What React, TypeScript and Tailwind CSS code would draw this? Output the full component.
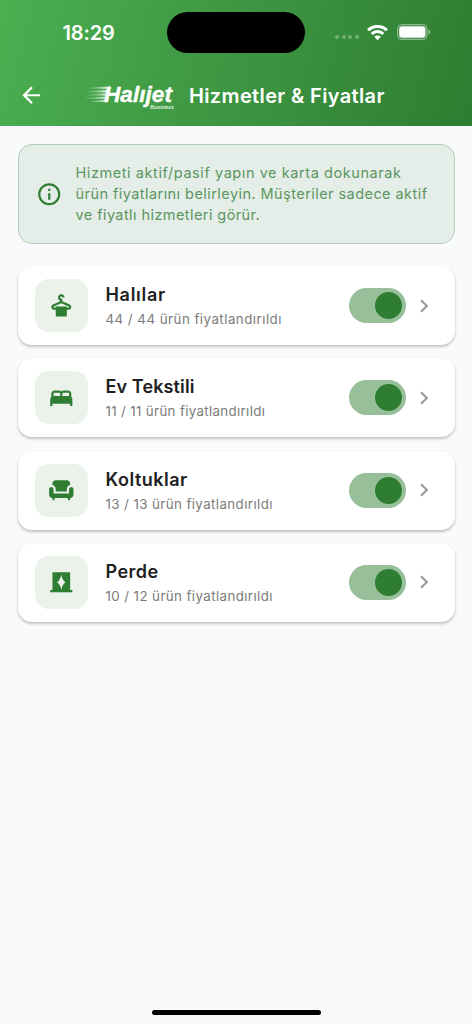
import type { ReactNode } from "react";
import { MdBed, MdChair, MdCurtains, MdDryCleaning, MdArrowBack, MdInfoOutline, MdChevronRight } from "react-icons/md";

type Service = { name: string; detail: string; icon: ReactNode; nameClass: string; detailClass: string };

const services: Service[] = [
  { name: "Halılar", detail: "44 / 44 ürün fiyatlandırıldı", icon: <MdDryCleaning />, nameClass: "tracking-[0.7px]", detailClass: "tracking-[0.48px]" },
  { name: "Ev Tekstili", detail: "11 / 11 ürün fiyatlandırıldı", icon: <MdBed />, nameClass: "tracking-[0.12px]", detailClass: "tracking-[0.34px]" },
  { name: "Koltuklar", detail: "13 / 13 ürün fiyatlandırıldı", icon: <MdChair />, nameClass: "tracking-[0.5px]", detailClass: "tracking-[0.41px]" },
  { name: "Perde", detail: "10 / 12 ürün fiyatlandırıldı", icon: <MdCurtains />, nameClass: "tracking-[0.45px]", detailClass: "tracking-[0.41px]" },
];

function Logo() {
  return (
    <svg width="98" height="30" viewBox="0 0 98 30" className="shrink-0">
      <defs>
        <linearGradient id="speed" gradientUnits="userSpaceOnUse" x1="2" x2="31" y1="0" y2="0">
          <stop offset="0" stopColor="#1f6b35" stopOpacity="0.4" />
          <stop offset="0.35" stopColor="#a0d0a0" stopOpacity="0.35" />
          <stop offset="1" stopColor="#fff" />
        </linearGradient>
      </defs>
      <g fill="url(#speed)">
        <path d="M10 6.4 32 5.6 31.5 8 10 7.6z" />
        <path d="M3 10.2 31 8.8 30.5 11.4 3 11.4z" />
        <path d="M10 13.4 30 12.1 29.5 14.7 10 14.6z" />
        <path d="M2 16.8 29.5 15.4 29 18 2 18z" />
        <path d="M12 20 29 18.6 28.3 21 12 21z" />
      </g>
      <g fill="#fff" fontFamily="Liberation Sans, sans-serif" fontStyle="italic" fontWeight="700">
        <text x="25" y="21" fontSize="22.5" textLength="68" lengthAdjust="spacingAndGlyphs" stroke="#fff" strokeWidth=".35">Halıjet</text>
        <text x="71" y="27.6" fontSize="5.5" textLength="24" lengthAdjust="spacingAndGlyphs" fillOpacity=".85">Business</text>
      </g>
    </svg>
  );
}

function StatusBar() {
  return (
    <div className="flex h-[65px] items-center">
      <div className="w-[167px] pl-[62.5px] font-['Inter'] text-[20px] font-semibold tracking-[-0.15px] text-white">18:29</div>
      <div className="h-[41px] w-[138px] rounded-full bg-black" />
      <div className="flex flex-1 items-center pl-[30px]">
        <div className="mt-[9px] flex gap-[2.5px]">
          {[0, 1, 2, 3].map((dot) => (
            <span key={dot} className="size-[4px] rounded-full bg-white/30" />
          ))}
        </div>
        <svg className="ml-[8px]" width="21" height="16" viewBox="0 0 21 16" fill="none" stroke="#fff" strokeWidth="3">
          <path d="M1.1 5.3a13.3 13.3 0 0 1 18.8 0" />
          <path d="M4.7 9a8.2 8.2 0 0 1 11.6 0" />
          <path d="M7.2 11.8a4.7 4.7 0 0 1 6.6 0L10.5 15.2z" fill="#fff" stroke="none" />
        </svg>
        <svg className="-mt-[1px] ml-[9px]" width="34" height="16" viewBox="0 0 34 16">
          <rect x=".6" y=".6" width="29.5" height="14.8" rx="4.8" fill="none" stroke="#fff" strokeOpacity=".45" strokeWidth="1.2" />
          <rect x="2.2" y="2.2" width="26.3" height="11.6" rx="3.3" fill="#fff" />
          <path d="M31.5 5.3c2.2.8 2.2 4.6 0 5.4z" fill="#fff" fillOpacity=".5" />
        </svg>
      </div>
    </div>
  );
}

function ServiceCard({ service }: { service: Service }) {
  return (
    <div className="flex h-[79px] items-center rounded-[14px] bg-white pl-[17.5px] pr-[18px] shadow-[0_2px_3px_rgba(0,0,0,0.22),0_0_2px_rgba(0,0,0,0.06)]">
      <div className="flex size-[53px] items-center justify-center rounded-[14px] bg-[#eaf2ea] text-[26.6px] text-[#2e7d32]">{service.icon}</div>
      <div className="ml-[17.5px] flex-1 whitespace-nowrap">
        <div className={`text-[18px] leading-[27px] font-semibold text-[#202020] ${service.nameClass}`}>{service.name}</div>
        <div className={`text-[13.3px] leading-[22px] text-[#7b7b7b] ${service.detailClass}`}>{service.detail}</div>
      </div>
      <div className="flex h-[35px] w-[57px] items-center justify-end rounded-full bg-[#97bf99] pr-[4px]">
        <div className="size-[27px] rounded-full bg-[#2e7d32]" />
      </div>
      <MdChevronRight className="ml-[5px] size-[26px] text-[#9a9a9a]" />
    </div>
  );
}

export default function App() {
  return (
    <div className="flex h-[1024px] w-[472px] flex-col bg-[#f9fafc] font-['Inter',sans-serif]">
      <header className="h-[126px] bg-[linear-gradient(105deg,#4caf50,#2e7d32)]">
        <StatusBar />
        <div className="flex h-[61px] items-center pl-[17.5px]">
          <MdArrowBack className="size-[26.5px] text-white" />
          <div className="ml-[35px] flex"><Logo /></div>
          <h1 className="ml-[12px] text-[20px] font-semibold tracking-[0.36px] whitespace-nowrap text-white">Hizmetler &amp; Fiyatlar</h1>
        </div>
      </header>
      <main className="flex flex-1 flex-col px-[17.5px] pt-[18px]">
        <div className="flex h-[100px] items-center rounded-[14px] border-[1.3px] border-[#b2ceb6] bg-[#e4ede7] pl-[17px]">
          <MdInfoOutline className="size-[26.5px] text-[#2e7d32]" />
          <div className="-mt-[1px] ml-[13.5px] text-[14.5px] leading-[21px] whitespace-nowrap text-[#5b9661]">
            <p className="tracking-[0.57px]">Hizmeti aktif/pasif yapın ve karta dokunarak</p>
            <p className="tracking-[0.44px]">ürün fiyatlarını belirleyin. Müşteriler sadece aktif</p>
            <p className="tracking-[0.42px]">ve fiyatlı hizmetleri görür.</p>
          </div>
        </div>
        <div className="mt-[22px] flex flex-col gap-[13.3px]">
          {services.map((service) => (
            <ServiceCard key={service.name} service={service} />
          ))}
        </div>
      </main>
      <footer className="flex justify-center pb-[9px]">
        <div className="h-[5px] w-[169px] rounded-full bg-black" />
      </footer>
    </div>
  );
}
